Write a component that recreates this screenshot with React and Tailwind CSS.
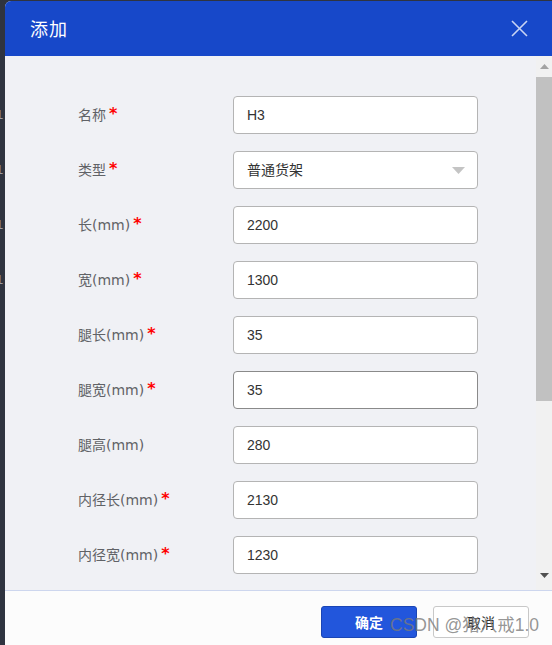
import React from 'react';

const fields = [
  { label: '名称', value: 'H3', required: true },
  { label: '类型', value: '普通货架', required: true, select: true },
  { label: '长(mm)', value: '2200', required: true },
  { label: '宽(mm)', value: '1300', required: true },
  { label: '腿长(mm)', value: '35', required: true },
  { label: '腿宽(mm)', value: '35', required: true, hover: true },
  { label: '腿高(mm)', value: '280', required: false },
  { label: '内径长(mm)', value: '2130', required: true },
  { label: '内径宽(mm)', value: '1230', required: true },
];

const font = { fontFamily: '"Liberation Sans", "Noto Sans CJK SC", sans-serif' };
const labelFont = { fontFamily: '"DejaVu Sans", "Noto Sans CJK SC", sans-serif' };
const cjk = { fontFamily: '"Noto Sans CJK SC", sans-serif' };

const Row = ({ field }) => (
  <div className="flex items-center h-[38px]">
    <div className="w-[155px] pl-[73px] box-content text-[14px] text-[#606266] flex items-center whitespace-nowrap" style={labelFont}>
      <span>{field.label}</span>
      {field.required && <span className="text-[#ff0000] ml-[3px] text-[16px] font-bold leading-none -mt-[3px]">*</span>}
    </div>
    <div
      className={`w-[245px] h-[38px] bg-white rounded-[4px] border flex items-center justify-between pl-[13px] pr-[12px] text-[14px] text-[#333] ${
        field.hover ? 'border-[#8a8a8a]' : 'border-[#b4b4b4]'
      }`}
    >
      <span>{field.value}</span>
      {field.select && (
        <svg width="13" height="7" viewBox="0 0 13 7">
          <path d="M0 0 L13 0 L6.5 7 Z" fill="#c4c4c4" />
        </svg>
      )}
    </div>
  </div>
);

const App = () => {
  return (
    <div className="w-[552px] h-[645px] bg-[#2f3440] flex overflow-hidden" style={font}>
      <div className="w-[5px] shrink-0 overflow-hidden flex flex-col text-[#9a9ca3] text-[13px] leading-none pt-[108px] gap-[42px]">
        <span className="-ml-[4px]">1</span>
        <span className="-ml-[4px]">1</span>
        <span className="-ml-[4px]">1</span>
        <span className="-ml-[4px]">1</span>
      </div>
      <div className="flex-1 mt-[1px] rounded-tl-[6px] overflow-hidden flex flex-col bg-[#fcfcfc]">
        <div className="h-[55px] shrink-0 bg-[#1748c9] flex items-center justify-between pl-[25px] pr-[24px]">
          <span className="text-white text-[18px] tracking-[1px]" style={cjk}>
            添加
          </span>
          <svg width="17" height="17" viewBox="0 0 17 17">
            <path d="M1 1 L16 16 M16 1 L1 16" stroke="#c9d4f3" strokeWidth="1.6" />
          </svg>
        </div>
        <div className="h-[534px] shrink-0 flex bg-[#f0f1f5]">
          <div className="flex-1 pt-[40px] flex flex-col gap-[17px] overflow-hidden">
            {fields.map((f) => (
              <Row key={f.label} field={f} />
            ))}
          </div>
          <div className="w-[16px] shrink-0 bg-[#f1f1f1] flex flex-col">
            <div className="h-[21px] flex items-center justify-center">
              <svg width="9" height="5" viewBox="0 0 9 5">
                <path d="M0 5 L9 5 L4.5 0 Z" fill="#a3a3a3" />
              </svg>
            </div>
            <div className="h-[324px] bg-[#c1c1c1]" />
            <div className="flex-1" />
            <div className="h-[22px] flex items-start justify-center pt-[5px]">
              <svg width="9" height="5" viewBox="0 0 9 5">
                <path d="M0 0 L9 0 L4.5 5 Z" fill="#505050" />
              </svg>
            </div>
          </div>
        </div>
        <div className="flex-1 border-t border-[#cdd6ee] bg-[#fcfcfc] relative flex justify-end items-start pt-[15px] pr-[23px] gap-[16px]">
          <button className="w-[96px] h-[32px] rounded-[3px] bg-[#2256dc] border border-[#1a45b5] text-white text-[14px] font-bold" style={cjk}>
            确定
          </button>
          <button className="w-[96px] h-[32px] rounded-[3px] bg-white border border-[#c8c8c8] text-[#333] text-[14px]" style={cjk}>
            取消
          </button>
          <span className="absolute left-[385px] top-[26px] text-[17.5px] leading-none text-[#7a7a7a]/80 whitespace-nowrap">
            CSDN @猪八戒1.0
          </span>
        </div>
      </div>
    </div>
  );
};

export default App;
